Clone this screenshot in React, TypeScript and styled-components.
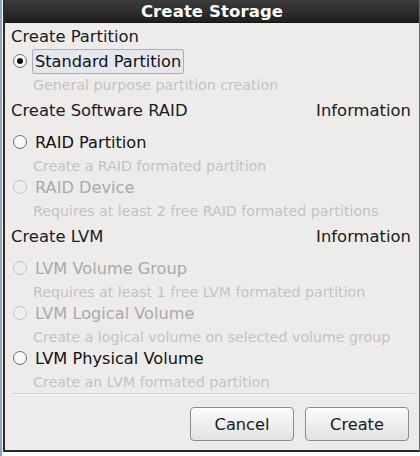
import React from "react";
import styled, { createGlobalStyle } from "styled-components";

const Global = createGlobalStyle`
  html, body { margin: 0; padding: 0; background: #ffffff; }
  body { font-family: "DejaVu Sans", "Liberation Sans", sans-serif; }
  * { box-sizing: border-box; }
`;

const Page = styled.div`
  width: 420px;
  height: 456px;
  padding: 0 0 0 3px;
  display: flex;
  flex-direction: column;
  background: linear-gradient(90deg, #8fa6c0 0, #8fa6c0 2px, #ffffff 2px);
`;

const Dialog = styled.div`
  width: 417px;
  height: 452px;
  display: flex;
  flex-direction: column;
  border-left: 2px solid #2a2a2a;
  border-right: 1px solid #6a6a6a;
  border-bottom: 2px solid #2a2a2a;
  background: #edeceb;
`;

const TitleBar = styled.div`
  height: 23px;
  flex: none;
  display: flex;
  align-items: center;
  justify-content: center;
  background: linear-gradient(#3c3c3c, #1f1f1f);
  border-bottom: 1px solid #151515;
  color: #ffffff;
  font-weight: bold;
  font-size: 16.5px;
  letter-spacing: 0.1px;
`;

const Body = styled.div`
  flex: 1;
  display: flex;
  flex-direction: column;
  padding: 0 4px 0 6px;
`;

const SectionHeader = styled.div<{ $h: number; $pt: number }>`
  height: ${(p) => p.$h}px;
  padding-top: ${(p) => p.$pt}px;
  display: flex;
  justify-content: space-between;
  align-items: flex-start;
  font-size: 16.4px;
  line-height: 20px;
  color: #1b1b1b;
  padding-right: 4px;
`;

const Block = styled.div`
  height: 45px;
  display: flex;
  flex-direction: column;
`;

const OptionRow = styled.div`
  height: 22px;
  display: flex;
  align-items: center;
  gap: 6px;
  padding-left: 2px;
`;

const Radio = styled.span<{ $checked?: boolean; $disabled?: boolean }>`
  width: 14px;
  height: 14px;
  border-radius: 50%;
  flex: none;
  border: 1px solid ${(p) => (p.$disabled ? "#c4c4c4" : "#6e6e6e")};
  background: ${(p) =>
    p.$disabled
      ? "#efeeed"
      : "radial-gradient(circle at 50% 35%, #ffffff 0, #f4f4f4 60%, #e2e2e2 100%)"};
  display: flex;
  align-items: center;
  justify-content: center;
  &::after {
    content: "";
    display: ${(p) => (p.$checked ? "block" : "none")};
    width: 6px;
    height: 6px;
    border-radius: 50%;
    background: #111111;
  }
`;

const OptionLabel = styled.span<{ $disabled?: boolean; $focused?: boolean }>`
  font-size: 16.2px;
  line-height: 23px;
  color: ${(p) => (p.$disabled ? "#a9a9a9" : "#111111")};
  padding: 0 2px;
  margin-left: -1px;
  border: 1px solid ${(p) => (p.$focused ? "#a3b1c1" : "transparent")};
  border-radius: 2px;
  background: ${(p) => (p.$focused ? "#e4e8ed" : "transparent")};
  height: ${(p) => (p.$focused ? "25px" : "auto")};
`;

const Desc = styled.div`
  padding-top: 3px;
  padding-left: 22px;
  font-size: 14.2px;
  line-height: 20px;
  color: #c3c3c3;
  white-space: nowrap;
`;

const Separator = styled.div`
  height: 2px;
  flex: none;
  margin: 1px 0 0 2px;
  border-top: 1px solid #cdcccb;
  border-bottom: 1px solid #fafafa;
`;

const ButtonBar = styled.div`
  display: flex;
  justify-content: flex-end;
  gap: 11px;
  padding: 12px 6px 0 0;
`;

const Button = styled.button`
  width: 104px;
  height: 34px;
  border: 1px solid #8d8d8d;
  border-radius: 4px;
  background: linear-gradient(#fbfbfb, #ececec 60%, #e2e2e2);
  box-shadow: inset 0 1px 0 #ffffff;
  font-family: "DejaVu Sans", "Liberation Sans", sans-serif;
  font-size: 16.2px;
  color: #1a1a1a;
  padding: 0;
`;

type Opt = { label: string; desc: string; checked?: boolean; disabled?: boolean; focused?: boolean };

const sections: { title: string; info?: string; h: number; pt: number; options: Opt[] }[] = [
  {
    title: "Create Partition",
    h: 27,
    pt: 4,
    options: [
      { label: "Standard Partition", desc: "General purpose partition creation", checked: true, focused: true },
    ],
  },
  {
    title: "Create Software RAID",
    info: "Information",
    h: 36,
    pt: 6,
    options: [
      { label: "RAID Partition", desc: "Create a RAID formated partition" },
      { label: "RAID Device", desc: "Requires at least 2 free RAID formated partitions", disabled: true },
    ],
  },
  {
    title: "Create LVM",
    info: "Information",
    h: 36,
    pt: 6,
    options: [
      { label: "LVM Volume Group", desc: "Requires at least 1 free LVM formated partition", disabled: true },
      { label: "LVM Logical Volume", desc: "Create a logical volume on selected volume group", disabled: true },
      { label: "LVM Physical Volume", desc: "Create an LVM formated partition" },
    ],
  },
];

export default function App() {
  return (
    <>
      <Global />
      <Page>
        <Dialog>
          <TitleBar>Create Storage</TitleBar>
          <Body>
            {sections.map((s) => (
              <React.Fragment key={s.title}>
                <SectionHeader $h={s.h} $pt={s.pt}>
                  <span>{s.title}</span>
                  {s.info && <span>{s.info}</span>}
                </SectionHeader>
                {s.options.map((o) => (
                  <Block key={o.label}>
                    <OptionRow>
                      <Radio $checked={o.checked} $disabled={o.disabled} />
                      <OptionLabel $disabled={o.disabled} $focused={o.focused}>
                        {o.label}
                      </OptionLabel>
                    </OptionRow>
                    <Desc>{o.desc}</Desc>
                  </Block>
                ))}
              </React.Fragment>
            ))}
            <Separator />
            <ButtonBar>
              <Button>Cancel</Button>
              <Button>Create</Button>
            </ButtonBar>
          </Body>
        </Dialog>
      </Page>
    </>
  );
}
